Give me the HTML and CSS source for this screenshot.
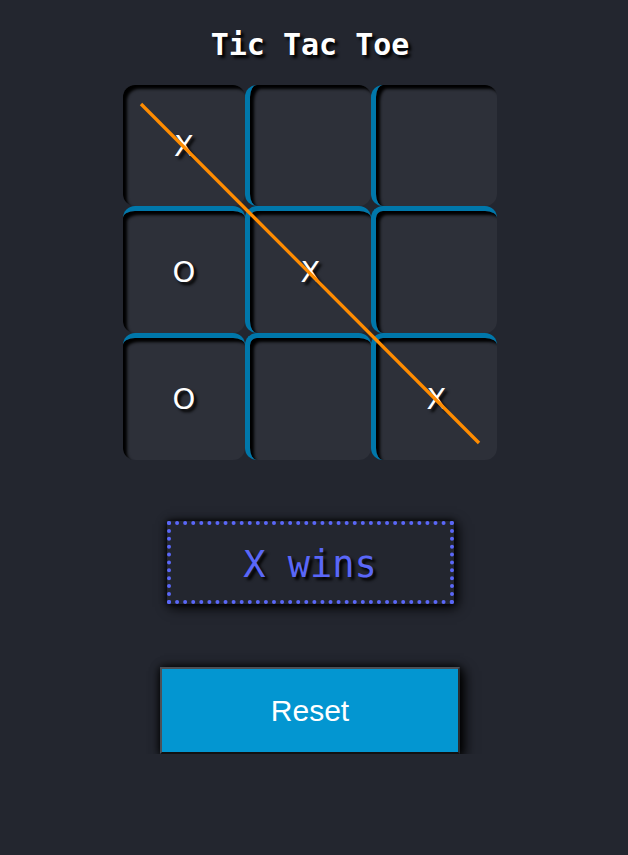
FILE: index.html
```html
<!DOCTYPE html>
<html>
<head>
<meta charset="utf-8">
<title>Tic Tac Toe</title>
<link rel="stylesheet" href="styles.css">
</head>
<body>
<main class="app">
  <h1 class="title">Tic Tac Toe</h1>
  <div class="board">
    <div class="cell">X</div>
    <div class="cell col-n"></div>
    <div class="cell col-n"></div>
    <div class="cell row-n">O</div>
    <div class="cell row-n col-n">X</div>
    <div class="cell row-n col-n"></div>
    <div class="cell row-n">O</div>
    <div class="cell row-n col-n"></div>
    <div class="cell row-n col-n">X</div>
    <svg class="strike" width="374" height="375" viewBox="0 0 374 375">
      <line x1="18" y1="19" x2="356" y2="358" stroke="#ff8c00" stroke-width="3.3"/>
    </svg>
  </div>
  <div class="status">X wins</div>
  <button class="reset">Reset</button>
</main>
</body>
</html>
```
FILE: styles.css
```css
html, body {
  margin: 0;
  padding: 0;
  background: #23262f;
}
.app {
  width: 620px;
  display: flex;
  flex-direction: column;
  align-items: center;
}
.title {
  margin: 27px 0 0 0;
  font-family: "DejaVu Sans Mono", monospace;
  font-weight: bold;
  font-size: 30px;
  line-height: 36px;
  color: #ffffff;
  text-shadow: 3px 3px 3px #000;
}
.board {
  position: relative;
  margin-top: 22px;
  display: grid;
  grid-template-columns: 122px 126px 126px;
  grid-template-rows: 121px 127px 127px;
}
.cell {
  box-sizing: border-box;
  background: #2d3039;
  border-radius: 12px;
  box-shadow: inset 4px 4px 3px #000;
  display: flex;
  align-items: center;
  justify-content: center;
  font-family: "DejaVu Sans", sans-serif;
  font-size: 29px;
  color: #ffffff;
  text-shadow: 3px 3px 3px #000;
}
.col-n {
  border-left: 5px solid #0077aa;
}
.row-n {
  border-top: 5px solid #0077aa;
}
.strike {
  position: absolute;
  left: 0;
  top: 0;
  pointer-events: none;
}
.status {
  box-sizing: border-box;
  margin-top: 61px;
  width: 287px;
  height: 83px;
  padding-top: 4px;
  border: 4px dotted #5a67f8;
  display: flex;
  align-items: center;
  justify-content: center;
  font-family: "DejaVu Sans Mono", monospace;
  font-size: 37px;
  color: #5a67f8;
  text-shadow: 3px 3px 3px #000;
  box-shadow: 3px 3px 12px #000, 0 0 6px #000;
}
.reset {
  box-sizing: border-box;
  margin-top: 63px;
  width: 300px;
  height: 87px;
  background: #0396d1;
  border: 2px solid #4d5158;
  border-bottom-color: #111;
  border-right-color: #2a2c30;
  font-family: "Liberation Sans", Arial, sans-serif;
  font-size: 30px;
  color: #ffffff;
  box-shadow: 4px 4px 12px #000, 0 0 8px #000;
  padding: 0;
}
```
